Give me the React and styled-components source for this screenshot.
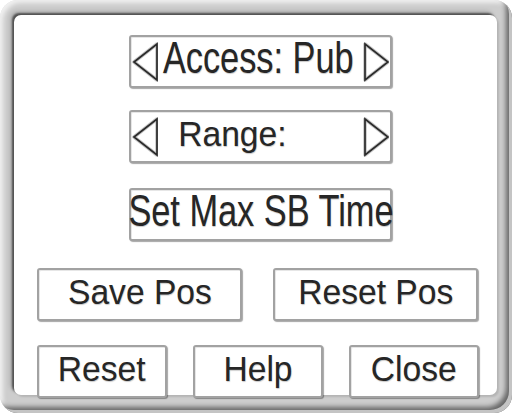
import React from 'react';
import styled, { createGlobalStyle } from 'styled-components';

const Global = createGlobalStyle`
  html, body {
    margin: 0;
    padding: 0;
    background: #ffffff;
  }
  body {
    font-family: "Liberation Sans", Arial, sans-serif;
  }
`;

const Frame = styled.div`
  width: 512px;
  height: 413px;
  box-sizing: border-box;
  padding: 15px 15px 18px 14px;
  border-radius: 18px;
  background: #cdcdcd;
  box-shadow:
    inset -4px -4px 0 -1px #c4c4c4,
    inset -8px -8px 5px -2px rgba(0, 0, 0, 0.5),
    inset 3px 3px 4px rgba(255, 255, 255, 0.7);
`;

const Panel = styled.div`
  height: 100%;
  box-sizing: border-box;
  background: #ffffff;
  border-radius: 7px;
  padding: 20px 18px 0 23px;
  display: flex;
  flex-direction: column;
  box-shadow:
    -2px -2px 2px rgba(0, 0, 0, 0.55),
    -4px -4px 4px rgba(0, 0, 0, 0.15),
    2px 2px 2px rgba(0, 0, 0, 0.12);
`;

const Row = styled.div`
  display: flex;
  gap: ${p => p.$gap || 26}px;
  margin-top: ${p => p.$top || 0}px;
  padding-left: ${p => p.$indent || 0}px;
`;

const Button = styled.div`
  width: ${p => p.$w}px;
  height: 53px;
  box-sizing: border-box;
  border: 2px solid #a2a2a2;
  border-radius: 3px;
  background: #ffffff;
  box-shadow: 1px 1px 1px rgba(0, 0, 0, 0.35), inset 1px 1px 0 #e6e6e6;
  display: flex;
  align-items: center;
  justify-content: ${p => (p.$arrows ? 'flex-start' : 'center')};
  padding: 0;
`;

const Label = styled.span`
  display: inline-block;
  flex: none;
  font-family: "Liberation Sans", Arial, sans-serif;
  font-size: ${p => (p.$big ? 44 : 35)}px;
  line-height: 1;
  color: #262626;
  white-space: nowrap;
  transform: scaleX(${p => (p.$big ? 0.78 : 0.96)});
  transform-origin: ${p => (p.$left ? 'left center' : 'center center')};
  text-shadow: 0.5px 0.5px 1px rgba(0, 0, 0, 0.22);
  margin-top: ${p => (p.$big ? -8 : -6)}px;
`;

const ArrowLabel = styled(Label)`
  flex: 1 1 0;
  min-width: 0;
  padding-left: ${p => p.$pad || 0}px;
`;

const Arrow = styled.svg`
  flex: none;
  width: 26px;
  height: 40px;
  margin: 0 1px;
`;

const Triangle = ({ dir }) => {
  const pts = dir === 'left' ? '2,20 25,2 25,38' : '2,2 2,38 25,20';
  return (
    <Arrow viewBox="0 0 26 40">
      <polygon points={pts} fill="none" stroke="#c4c4c4" strokeWidth="3.5" strokeLinejoin="round" />
      <polygon points={pts} fill="none" stroke="#2a2a2a" strokeWidth="1.7" strokeLinejoin="miter" />
    </Arrow>
  );
};

const CycleButton = ({ label, pad, big }) => (
  <Button $w={263} $arrows>
    <Triangle dir="left" />
    <ArrowLabel $big={big} $left $pad={pad}>{label}</ArrowLabel>
    <Triangle dir="right" />
  </Button>
);

export default function App() {
  return (
    <>
      <Global />
      <Frame>
        <Panel>
          <Row $indent={92}>
            <CycleButton label="Access: Pub" big pad={5} />
          </Row>
          <Row $top={22} $indent={92}>
            <CycleButton label="Range:" pad={20} />
          </Row>
          <Row $top={25} $indent={92}>
            <Button $w={263}>
              <Label $big>Set Max SB Time</Label>
            </Button>
          </Row>
          <Row $top={27} $gap={31}>
            <Button $w={205}>
              <Label>Save Pos</Label>
            </Button>
            <Button $w={205}>
              <Label>Reset Pos</Label>
            </Button>
          </Row>
          <Row $top={24}>
            <Button $w={130}>
              <Label>Reset</Label>
            </Button>
            <Button $w={130}>
              <Label>Help</Label>
            </Button>
            <Button $w={130}>
              <Label>Close</Label>
            </Button>
          </Row>
        </Panel>
      </Frame>
    </>
  );
}
